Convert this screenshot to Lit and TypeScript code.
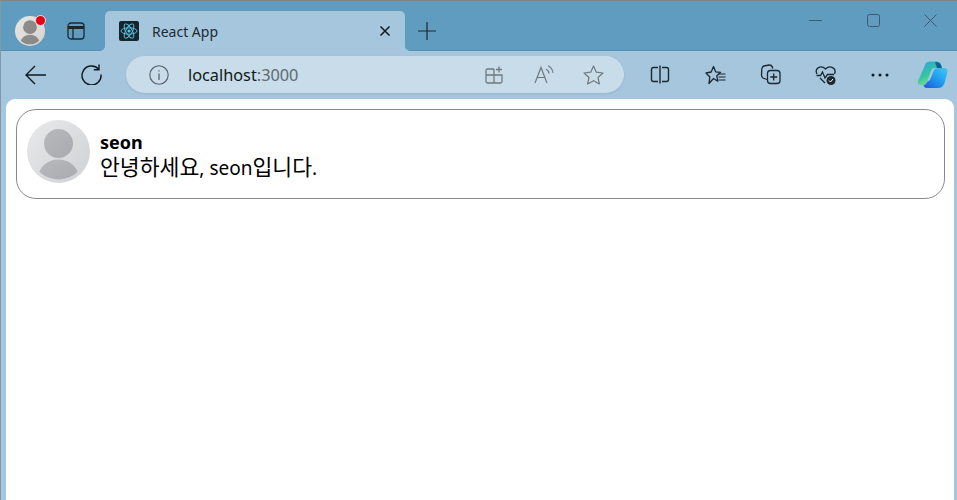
import { LitElement, html, css, svg } from "lit";
import { customElement } from "lit/decorators.js";

const ic = (w: number, h: number, body: unknown, cls = "") =>
  html`<svg class="ic ${cls}" width=${w} height=${h} viewBox="0 0 ${w} ${h}" fill="none" stroke="#1c2730" stroke-width="1.3">${body}</svg>`;

@customElement("app-root")
export class AppRoot extends LitElement {
  static styles = css`
    :host { display: flex; flex-direction: column; width: 957px; height: 500px; overflow: hidden; background: #a5c6dc; border-top: 1px solid #7f8589; border-left: 1px solid #7f98aa; box-sizing: border-box; font-family: "Open Sans", "Noto Sans", sans-serif; }
    svg { display: block; flex: none; }
    .strip { height: 50px; background: #609cc0; display: flex; align-items: flex-end; box-sizing: border-box; box-shadow: inset 0 -1px 0 #5a91b3; }
    .profile { position: relative; width: 30px; height: 30px; margin: 0 0 5px 14px; }
    .dot { position: absolute; left: 20px; top: 0px; width: 9px; height: 9px; border-radius: 50%; background: #e60012; border: 1.5px solid #e6e6e6; box-sizing: content-box; margin: -1px 0 0 0; }
    .tabs-btn { margin: 0 0 11px 22px; }
    .tab { position: relative; width: 300px; height: 40px; margin-left: 20px; background: #a5c6dc; border-radius: 5px 5px 0 0; display: flex; align-items: center; box-sizing: border-box; padding: 0 14px 0 14px; }
    .tab::before, .tab::after { content: ""; position: absolute; bottom: 0; width: 5px; height: 5px; }
    .tab::before { left: -5px; background: radial-gradient(circle at 0 0, #609cc0 4.6px, #a5c6dc 5.2px); }
    .tab::after { right: -5px; background: radial-gradient(circle at 100% 0, #609cc0 4.6px, #a5c6dc 5.2px); }
    .tab-title { font-family: "Noto Sans", sans-serif; font-size: 14px; color: #1f2a33; margin-left: 13px; flex: 1; }
    .plus { margin: 0 0 11px 13px; }
    .win { margin-left: auto; align-self: flex-start; display: flex; gap: 44.5px; padding: 13px 20px 0 0; align-items: center; }
    .bar { height: 47px; display: flex; align-items: center; box-sizing: border-box; padding-left: 24px; }
    .reload { margin-left: 35px; }
    .addr { width: 498px; height: 37px; margin-left: 24px; border-radius: 18.5px; background: #c8dce9; display: flex; align-items: center; box-sizing: border-box; padding-left: 23px; box-shadow: 0 1px 2px rgba(70,110,140,.18); }
    .url { font-family: "Noto Sans", sans-serif; font-size: 16.3px; color: #101820; margin-left: 19px; flex: 1; }
    .url span { color: #5e6a72; }
    .addr-ic { display: flex; gap: 29px; align-items: center; padding-right: 20px; }
    .grid-ic { margin-right: 2px; }
    .tools { display: flex; align-items: center; gap: 34px; margin-left: 26px; }
    .m1 { margin-left: 1px; }
    .copilot { margin-left: -6px; }
    .page { flex: 1; margin: 1px 3px 0 5px; background: #fff; border-radius: 9px 9px 0 0; padding: 10px 9px 0 10px; }
    .card { height: 90px; box-sizing: border-box; border: 1px solid #8a8a8a; border-radius: 20px; display: flex; align-items: flex-start; padding: 10px 0 0 10px; }
    .text { margin-left: 10px; padding-top: 9px; font-family: "Noto Sans", "Noto Sans CJK KR", sans-serif; font-size: 18px; line-height: 26px; color: #000; }
    .name { font-weight: 700; }
    .msg { font-size: 19px; margin-top: -2px; }
    .ko { font-family: "Noto Sans CJK KR", sans-serif; font-size: 21.6px; }
  `;

  private avatar(uid: string, size: number, bg: string, end: string, fg: string, fgEnd: string) {
    return html`<svg width=${size} height=${size} viewBox="0 0 63 63">
      <defs>
        <linearGradient id="${uid}g" x1="0" y1="0" x2="1" y2="1"><stop offset="0" stop-color=${bg}/><stop offset="1" stop-color=${end}/></linearGradient>
        <linearGradient id="${uid}f" x1="0" y1="0" x2="1" y2="1"><stop offset="0" stop-color=${fg}/><stop offset="1" stop-color=${fgEnd}/></linearGradient>
        <clipPath id="${uid}c"><circle cx="31.5" cy="31.5" r="28"/></clipPath>
      </defs>
      <circle cx="31.5" cy="31.5" r="31.5" fill="url(#${uid}g)"/>
      <circle cx="31.5" cy="23.5" r="14.5" fill="url(#${uid}f)"/>
      <g clip-path="url(#${uid}c)"><path d="M10 63C10 49 19 39.500 31.500 39.500S53 49 53 63Z" fill="url(#${uid}f)"/></g>
    </svg>`;
  }

  render() {
    return html`
      <div class="strip">
        <div class="profile">${this.avatar("p", 30, "#e8e6e4", "#d6d3d0", "#8f8d8b", "#8a8886")}<span class="dot"></span></div>
        ${ic(18, 18, svg`<rect x="1" y="1" width="16" height="16" rx="3"/><path d="M1 5.500H17" stroke-width="3"/><path d="M6 6V17"/>`, "tabs-btn")}
        <div class="tab">
          <svg width="20" height="20" viewBox="0 0 20 20"><rect width="20" height="20" rx="2" fill="#16252d"/><g fill="none" stroke="#5ec8e6" stroke-width=".9"><ellipse cx="10" cy="10" rx="8" ry="3.200"/><ellipse cx="10" cy="10" rx="8" ry="3.200" transform="rotate(60 10 10)"/><ellipse cx="10" cy="10" rx="8" ry="3.200" transform="rotate(120 10 10)"/></g><circle cx="10" cy="10" r="1.600" fill="#5ec8e6"/></svg>
          <span class="tab-title">React App</span>
          ${ic(12, 12, svg`<path d="M1.500 1.500L10.500 10.500M10.500 1.500L1.500 10.500" stroke="#10181f" stroke-width="1.500"/>`)}
        </div>
        ${ic(18, 18, svg`<path d="M0 9H18M9 0V18" stroke-width="1.200"/>`, "plus")}
        <div class="win">
          ${ic(13, 13, svg`<path d="M0 6.500H13" stroke="#3f5a6c" stroke-width="1"/>`)}
          ${ic(13, 13, svg`<rect x=".5" y=".5" width="12" height="12" rx="2" stroke="#3f5a6c" stroke-width="1"/>`)}
          ${ic(13, 13, svg`<path d="M.5 .5L12.500 12.500M12.500 .5L.5 12.500" stroke="#3f5a6c" stroke-width="1"/>`)}
        </div>
      </div>
      <div class="bar">
        ${ic(21, 20, svg`<path d="M1 10H21M10 1L1 10L10 19" stroke="#10181f" stroke-width="1.400"/>`)}
        ${ic(21, 21, svg`<path d="M17.500 5A9.500 9.500 0 1 0 20 10.500" stroke="#10181f" stroke-width="1.400"/><path d="M18 .5V5.700H12.800" stroke="#10181f" stroke-width="1.400"/>`, "reload")}
        <div class="addr">
          ${ic(20, 20, svg`<circle cx="10" cy="10" r="9.200" stroke="#555f66" stroke-width="1.100"/><path d="M10 8.500V15M10 5.300V6.600" stroke="#555f66" stroke-width="1.200"/>`)}
          <div class="url">localhost<span>:3000</span></div>
          <div class="addr-ic">
            ${ic(18, 18, svg`<path d="M9 3H2.500A1.500 1.500 0 0 0 1 4.500V15.500A1.500 1.500 0 0 0 2.500 17H15.500A1.500 1.500 0 0 0 17 15.500V9H1M9 3V17M14 .5V6.500M11 3.500H17" stroke="#6f7a80" stroke-width="1.300"/>`, "grid-ic")}
            ${ic(20, 19, svg`<path d="M1 18L7 2.500L13 18M3.200 12.500H10.800" stroke="#6f7a80" stroke-width="1.200"/><path d="M12 4A6 6 0 0 1 15 8.500M14 .8A9 9 0 0 1 19 8" stroke="#6f7a80" stroke-width="1.100"/>`)}
            ${ic(21, 20, svg`<path d="M10.500 1L13.300 7.200L20 8L15 12.500L16.400 19L10.500 15.700L4.600 19L6 12.500L1 8L7.700 7.200Z" stroke="#6f7a80" stroke-width="1.200" stroke-linejoin="round"/>`)}
          </div>
        </div>
        <div class="tools">
          ${ic(20, 19, svg`<path d="M8 2.500H3.500A2 2 0 0 0 1.500 4.500V14.500A2 2 0 0 0 3.500 16.500H8M12 2.500H16.500A2 2 0 0 1 18.500 4.500V14.500A2 2 0 0 1 16.500 16.500H12M10 .5V18.500" stroke-width="1.400"/>`)}
          ${ic(21, 20, svg`<path d="M8.500 1.500L10.600 6.800L15.500 7.300L11.800 10.800L12.800 16.200L8.500 13.500L4 18.500L4.800 12L1 8L6.200 7Z" stroke-width="1.300" stroke-linejoin="round"/><path d="M14 9H20.500M13.500 12H20.500M13.500 15H20.500" stroke-width="1.200"/>`, "m1")}
          ${ic(21, 21, svg`<path d="M7 15.500L3 14Q1.500 13 1.500 11L1.800 5Q2 2.500 4 2L9 1Q12 .8 12.800 4.500" stroke-width="1.300"/><rect x="7.500" y="6.500" width="12.500" height="13" rx="3" stroke-width="1.300"/><path d="M13.700 9.500V16.500M10.300 13H17.200" stroke-width="1.300"/>`)}
          ${ic(21, 20, svg`<path d="M2 9C-1 3 6 -.5 10.500 4C15 -.5 22 3 19.500 9M1.500 10.500H5.500L7.500 7L10 13L12.500 9.500H19M5 13L10 18" stroke-width="1.300"/><circle cx="16" cy="15.500" r="4.500" fill="#1c2730" stroke="none"/><path d="M14 15.500L15.500 17L18 14" stroke="#fff" stroke-width="1"/>`)}
          ${ic(18, 4, svg`<circle cx="2" cy="2" r="1.500" fill="#10181f" stroke="none"/><circle cx="9" cy="2" r="1.500" fill="#10181f" stroke="none"/><circle cx="16" cy="2" r="1.500" fill="#10181f" stroke="none"/>`, "m1")}
          <svg class="copilot" width="31" height="28" viewBox="0 0 31 28">
            <defs>
              <linearGradient id="cpa" x1="0" y1="0" x2=".5" y2="1"><stop offset="0" stop-color="#2aa3e0"/><stop offset=".6" stop-color="#35c6a0"/><stop offset="1" stop-color="#7fe08a"/></linearGradient>
              <linearGradient id="cpb" x1="0" y1="1" x2="1" y2="0"><stop offset="0" stop-color="#1f55d8"/><stop offset=".5" stop-color="#1e9cf0"/><stop offset="1" stop-color="#45c8f5"/></linearGradient>
            </defs>
            <path d="M9 2Q10 .5 13 .5H20Q23 .5 24 3L25 7H18Q15 7 14 10L10 21Q9 24 6 24H4Q0 24 1 20Z" fill="url(#cpa)"/>
            <path d="M18 1Q22 .5 24 4L25 7H20Z" fill="#12608f"/>
            <path d="M17 9Q18 7 21 7H27Q31 7 30.500 11L27.500 22Q26 27 21 27H10Q7 27 6.500 24Q9 24 10 21L13 19Z" fill="url(#cpb)"/>
          </svg>
        </div>
      </div>
      <div class="page">
        <div class="card">
          ${this.avatar("a", 63, "#e8e9eb", "#d0d1d3", "#b8b9bc", "#a9aaad")}
          <div class="text">
            <div class="name">seon</div>
            <div class="msg"><span class="ko">안녕하세요</span>, seon<span class="ko">입니다</span>.</div>
          </div>
        </div>
      </div>
    `;
  }
}
